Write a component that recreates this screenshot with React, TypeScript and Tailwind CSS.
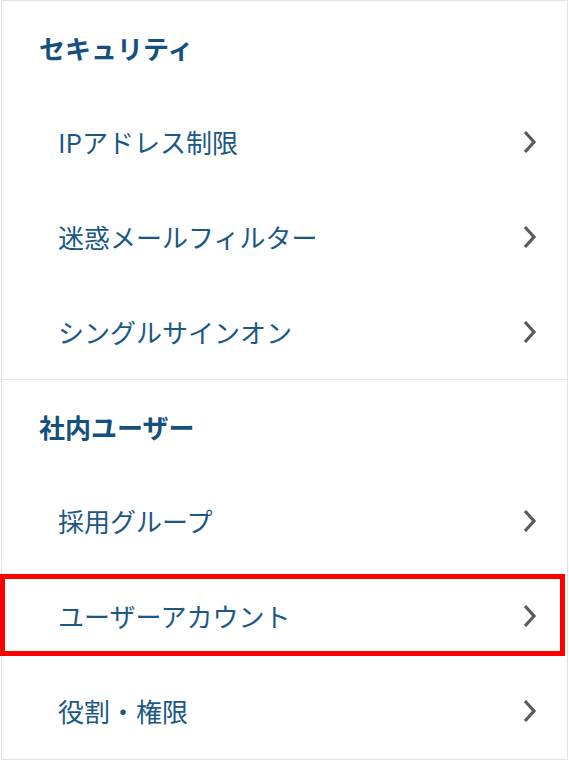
import React from 'react';

const sections = [
  {
    title: 'セキュリティ',
    items: ['IPアドレス制限', '迷惑メールフィルター', 'シングルサインオン'],
  },
  {
    title: '社内ユーザー',
    items: ['採用グループ', 'ユーザーアカウント', '役割・権限'],
  },
];

function Chevron() {
  return (
    <svg width="16" height="24" viewBox="0 0 16 24" fill="none" className="shrink-0">
      <path d="M3 2 L12 12 L3 22" stroke="#5a5a5a" strokeWidth="3.2" strokeLinecap="butt" strokeLinejoin="miter" />
    </svg>
  );
}

export default function App() {
  return (
    <div className="bg-white w-[569px] h-[761px] font-['Noto_Sans_CJK_JP','Noto_Sans',sans-serif]">
      <div className="ml-px w-[567px] h-[760px] border border-[#e3e3e3]">
        {sections.map((s, si) => (
          <div key={s.title} className={si === 0 ? 'border-b border-[#e3e3e3]' : ''}>
            <div className="h-[93px] flex items-center pl-[37px]">
              <h2 className="text-[26px] font-bold text-[#15507e]">{s.title}</h2>
            </div>
            {s.items.map((item) => (
              <div key={item} className="relative h-[95px] flex items-center justify-between pl-[56px] pr-[29px]">
                <span className="text-[26px] text-[#1b5886]">{item}</span>
                <Chevron />
                {item === 'ユーザーアカウント' && (
                  <div className="absolute left-[-2px] w-[565px] top-[6px] h-[82px] border-[5px] border-[#ff0000]" />
                )}
              </div>
            ))}
          </div>
        ))}
      </div>
    </div>
  );
}
